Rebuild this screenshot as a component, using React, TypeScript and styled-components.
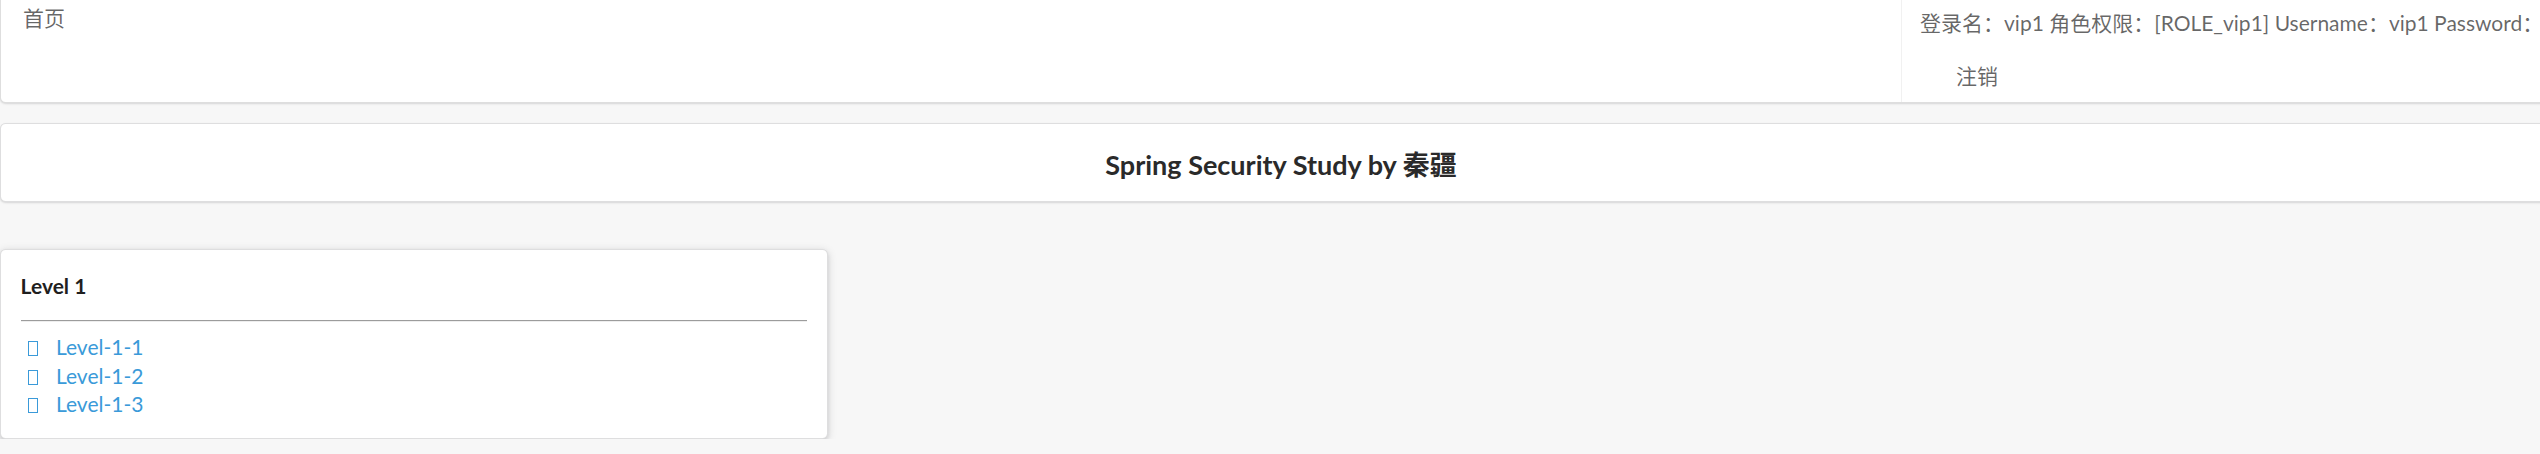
import React from 'react';
import styled, { createGlobalStyle } from 'styled-components';

//#region Styled
const GlobalStyle = createGlobalStyle`
  html, body {
    margin: 0;
    padding: 0;
    background: #f7f7f7;
    overflow: hidden;
  }
  body {
    font-family: Lato, "Noto Sans CJK SC", "Helvetica Neue", Arial, sans-serif;
    font-size: 21px;
    line-height: 28px;
    color: rgba(0, 0, 0, 0.87);
  }
`;

const Page = styled.div`
  width: 2562px;
`;

const Segment = styled.div`
  background: #fff;
  border: 1px solid rgba(34, 36, 38, 0.15);
  border-radius: 5.6px;
  box-shadow: 0 1px 2px 0 rgba(34, 36, 38, 0.15);
  box-sizing: border-box;
  margin-bottom: 19.6px;
`;

const HeaderNav = styled(Segment)`
  height: 103px;
  border-top: none;
  border-radius: 0 0 5.6px 5.6px;
  display: flex;
  align-items: flex-start;
`;

const MenuItem = styled.a`
  color: rgba(0, 0, 0, 0.6);
  text-decoration: none;
  line-height: 28px;
  cursor: pointer;
`;

const HomeItem = styled(MenuItem)`
  padding: 4px 0 0 22px;
`;

const RightMenu = styled.div`
  margin-left: auto;
  width: 660px;
  align-self: stretch;
  border-left: 1px solid #f1f1f1;
  display: flex;
  flex-direction: column;
  gap: 25px;
  padding: 9px 0 0 18px;
  box-sizing: border-box;
  white-space: nowrap;
`;

const LogoutIcon = styled.i`
  display: inline-block;
  width: 36px;
`;

const TitleSegment = styled(Segment)`
  height: 79px;
  padding: 25px 0 0;
  text-align: center;
`;

const Title = styled.h3`
  margin: 0;
  font-size: 27px;
  font-weight: 700;
  line-height: 32px;
  color: #2a2a2a;
`;

const Spacer = styled.div`
  height: 28px;
`;

const Grid = styled.div`
  display: grid;
  grid-template-columns: repeat(3, 1fr);
  column-gap: 39.2px;
`;

const RaisedSegment = styled(Segment)`
  padding: 19.6px;
  margin: 0;
  box-shadow: 0 2px 4px 0 rgba(34, 36, 38, 0.12), 0 2px 10px 0 rgba(34, 36, 38, 0.15);
`;

const CardTitle = styled.h5`
  margin: 3px 0 22px;
  font-size: 21px;
  font-weight: 700;
  line-height: 25.2px;
  color: #1f1f1f;
`;

const Rule = styled.hr`
  margin: 0 0 11px;
  height: 0;
  border: none;
  border-top: 1px solid #9c9c9c;
  border-bottom: 1px solid #eeeeee;
`;

const LinkRow = styled.div`
  line-height: 27.6px;
`;

const Link = styled.a`
  color: #3a9ad9;
  text-decoration: none;
`;

const Tofu = styled.i`
  display: inline-block;
  width: 25px;
  margin-right: 5px;
  text-align: center;
  vertical-align: -1px;

  &::before {
    content: '';
    display: inline-block;
    width: 8px;
    height: 13px;
    border: 1.5px solid currentColor;
  }
`;
//#endregion

const links = ['Level-1-1', 'Level-1-2', 'Level-1-3'];

export default function App() {
  return (
    <>
      <GlobalStyle />
      <Page>
        <HeaderNav>
          <HomeItem>首页</HomeItem>
          <RightMenu>
            <MenuItem>登录名：vip1 角色权限：[ROLE_vip1] Username：vip1 Password：</MenuItem>
            <MenuItem>
              <LogoutIcon />
              注销
            </MenuItem>
          </RightMenu>
        </HeaderNav>

        <TitleSegment>
          <Title>Spring Security Study by 秦疆</Title>
        </TitleSegment>

        <Spacer />
        <Grid>
          <RaisedSegment>
            <CardTitle>Level 1</CardTitle>
            <Rule />
            {links.map((l) => (
              <LinkRow key={l}>
                <Link>
                  <Tofu /> {l}
                </Link>
              </LinkRow>
            ))}
          </RaisedSegment>
        </Grid>
      </Page>
    </>
  );
}
